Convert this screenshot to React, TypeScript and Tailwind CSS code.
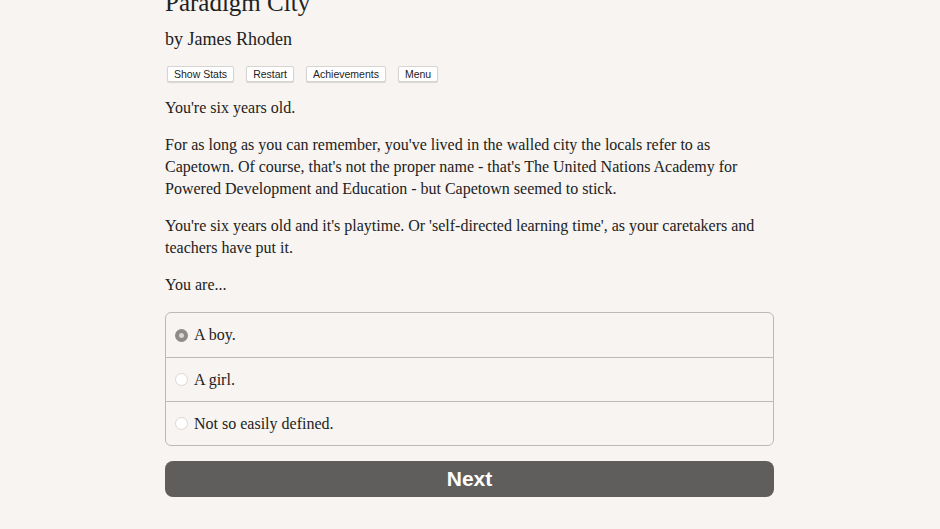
import React from "react"

const serif = { fontFamily: '"Liberation Serif", "Times New Roman", serif' }

const options = ["A boy.", "A girl.", "Not so easily defined."]

export default function App() {
  return (
    <div className="w-[940px] h-[529px] overflow-hidden bg-[#f7f4f1] text-[#222]" style={serif}>
      <div className="ml-[165px] w-[609px] -mt-[12px]">
        {/* Title */}
        <h1 className="text-[25px] leading-[30px] text-[#222]">Paradigm City</h1>
        <h2 className="text-[18px] leading-[24px] mt-[9px]">by James Rhoden</h2>

        {/* Toolbar */}
        <div className="flex gap-[12px] mt-[15px] ml-[2px]" style={{ fontFamily: '"Liberation Sans", Arial, sans-serif' }}>
          {["Show Stats", "Restart", "Achievements", "Menu"].map((b) => (
            <button
              key={b}
              className="h-[16px] px-[6px] text-[10.5px] leading-[14px] text-[#222] bg-white border border-[#d6d3d0] rounded-[2px] shadow-[0_1px_1px_rgba(0,0,0,0.12)]"
            >
              {b}
            </button>
          ))}
        </div>

        {/* Story */}
        <div className="text-[16px] leading-[22px] mt-[15px]">
          <p>You're six years old.</p>
          <p className="mt-[15px]">
            For as long as you can remember, you've lived in the walled city the locals refer to as Capetown. Of course,
            that's not the proper name - that's The United Nations Academy for Powered Development and Education - but
            Capetown seemed to stick.
          </p>
          <p className="mt-[15px]">
            You're six years old and it's playtime. Or 'self-directed learning time', as your caretakers and teachers
            have put it.
          </p>
          <p className="mt-[15px]">You are...</p>
        </div>

        {/* Choices */}
        <div className="mt-[16px] border border-[#bdb9b6] rounded-[6px] overflow-hidden">
          {options.map((o, i) => (
            <label
              key={o}
              className={`flex items-center h-[44px] pl-[9px] text-[16px] ${i > 0 ? "border-t border-[#bdb9b6]" : ""}`}
            >
              <span
                className={`w-[13px] h-[13px] rounded-full flex items-center justify-center mr-[6px] ${
                  i === 0 ? "bg-[#8e8c8a]" : "bg-white border border-[#dad7d4]"
                }`}
              >
                {i === 0 && <span className="w-[5px] h-[5px] rounded-full bg-[#d8d6d4]" />}
              </span>
              {o}
            </label>
          ))}
        </div>

        {/* Next */}
        <button
          className="mt-[15px] w-full h-[36px] rounded-[8px] bg-[#5f5e5c] text-white text-[21px] font-bold flex items-center justify-center"
          style={{ fontFamily: '"Liberation Sans", Arial, sans-serif' }}
        >
          Next
        </button>
      </div>
    </div>
  )
}
